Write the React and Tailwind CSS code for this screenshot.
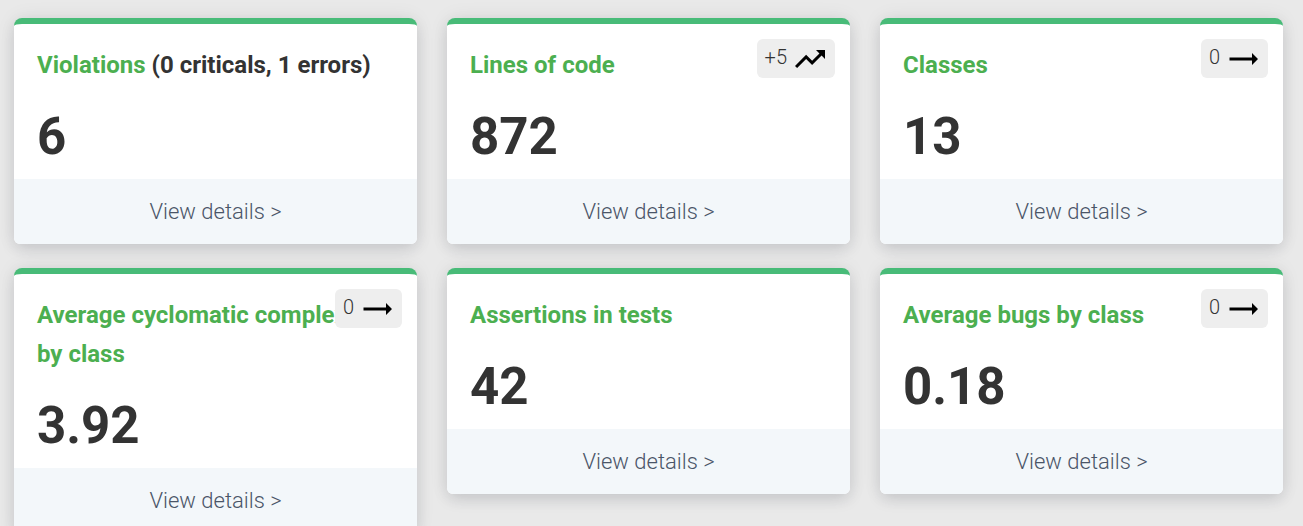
const cards = [
  { title: 'Violations', note: '(0 criticals, 1 errors)', value: '6' },
  { title: 'Lines of code', value: '872', trend: '+5', up: true },
  { title: 'Classes', value: '13', trend: '0' },
  { title: 'Average cyclomatic complexity by class', value: '3.92', trend: '0' },
  { title: 'Assertions in tests', value: '42' },
  { title: 'Average bugs by class', value: '0.18', trend: '0' },
];

function TrendIcon({ up }) {
  return (
    <svg viewBox="0 0 36 36" className="size-9" fill="currentColor" aria-hidden="true">
      {up ? (
        <path d="M24 9l3.44 3.44-7.32 7.32-6-6L3 24.88 5.12 27l9-9 6 6 9.44-9.44L33 18V9z" />
      ) : (
        <path d="M33 18l-6-6v4.5H4.5v3H27V24z" />
      )}
    </svg>
  );
}

function Card({ title, note, value, trend, up }) {
  return (
    <section className="relative rounded-t-lg rounded-b-md border-t-6 border-[#48bb78] bg-white shadow-[0_0_20px_rgba(0,0,0,0.07),0_6px_16px_-2px_rgba(30,35,55,0.15)]">
      <div className="px-[23px] pt-[22px] pb-[10px]">
        <h2 className="text-2xl leading-[39px] font-bold text-[#333]">
          <a href="#" className="text-[#4caf50]">{title}</a>
          {note && ` ${note}`}
        </h2>
        <p className="pt-5 text-[51px] leading-16 font-bold text-[#333]">{value}</p>
      </div>
      <a href="#" className="block rounded-b-md bg-[#f3f7fa] py-[13px] text-center text-[22px] leading-[39px] font-light text-[#4a5568]">
        View details &gt;
      </a>
      {trend && (
        <span className="absolute top-[15px] right-[15px] flex h-[39px] items-center gap-[5px] rounded-md bg-[#eee] pr-[7px] pl-2 text-xl font-light text-[#333]">
          <span className="pb-[3px]">{trend}</span>
          <span className="text-black"><TrendIcon up={up} /></span>
        </span>
      )}
    </section>
  );
}

export default function App() {
  return (
    <main className="min-h-screen bg-[#e9e9e9] pt-[18px] pr-5 pl-[14px] font-[Roboto,sans-serif]">
      <div className="grid grid-cols-3 items-start gap-x-[30px] gap-y-6">
        {cards.map((card) => <Card key={card.title} {...card} />)}
      </div>
    </main>
  );
}
